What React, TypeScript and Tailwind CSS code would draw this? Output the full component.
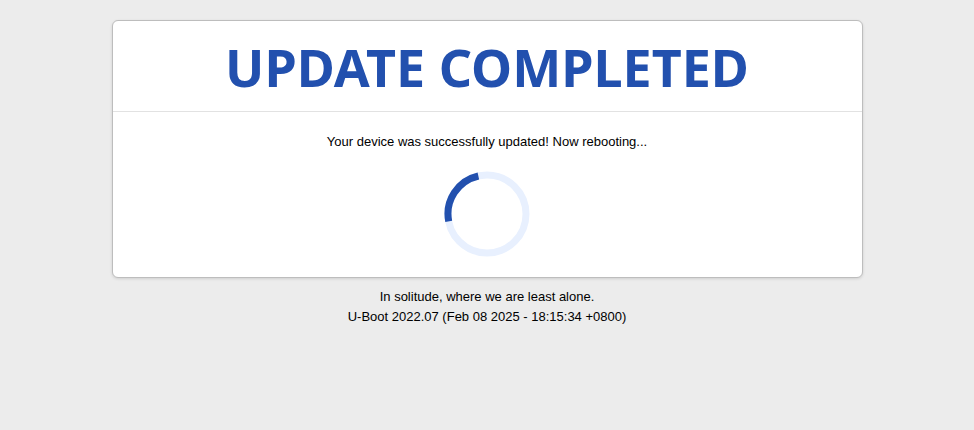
import React from "react";

function Spinner() {
  const r = 39;
  const c = 2 * Math.PI * r;
  const arc = (c * 88) / 360;
  return (
    <svg width="86" height="86" viewBox="0 0 86 86" className="block">
      <circle cx="43" cy="43" r={r} fill="none" stroke="#e8f0fe" strokeWidth="7" />
      <circle
        cx="43"
        cy="43"
        r={r}
        fill="none"
        stroke="#2250ae"
        strokeWidth="7"
        strokeDasharray={`${arc} ${c}`}
        transform="rotate(169 43 43)"
      />
    </svg>
  );
}

export default function App() {
  return (
    <div className="min-h-[430px] w-full bg-[#ececec] pt-5 font-['Liberation_Sans',Arial,sans-serif] text-black">
      <div className="mx-auto w-[751px] rounded-[6px] border border-[#bdbdbd] bg-white shadow-[0_1px_3px_rgba(0,0,0,0.12)]">
        <div className="flex h-[91px] items-center justify-center border-b border-[#e2e2e2] pt-[2px]">
          <h1 className="font-['Noto_Sans',sans-serif] text-[52px] font-bold leading-none text-[#2250ae]">
            UPDATE COMPLETED
          </h1>
        </div>
        <div className="flex flex-col items-center pb-[20px] pt-[22px]">
          <p className="text-[13px] leading-[16px]">Your device was successfully updated! Now rebooting...</p>
          <div className="mt-[21px]">
            <Spinner />
          </div>
        </div>
      </div>
      <div className="mt-[9px] text-center text-[13px] leading-[20px]">
        <div>In solitude, where we are least alone.</div>
        <div>U-Boot 2022.07 (Feb 08 2025 - 18:15:34 +0800)</div>
      </div>
    </div>
  );
}
